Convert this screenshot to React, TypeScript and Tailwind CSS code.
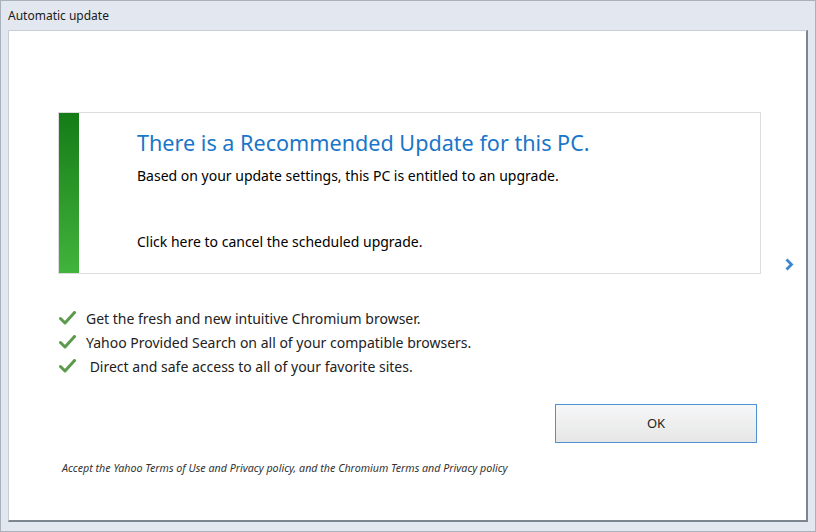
import React from 'react';

const font = { fontFamily: '"Noto Sans", "Open Sans", Arial, sans-serif' };

function Check() {
  return (
    <svg width="17" height="14" viewBox="0 0 17 14" className="shrink-0">
      <path d="M1.5 7.5 L6 12 L15.5 1.5" fill="none" stroke="#5a9a4a" strokeWidth="3" strokeLinecap="round" strokeLinejoin="round" />
    </svg>
  );
}

const perks = [
  'Get the fresh and new intuitive Chromium browser.',
  'Yahoo Provided Search on all of your compatible browsers.',
  ' Direct and safe access to all of your favorite sites.',
];

export default function App() {
  return (
    <div className="flex h-[532px] w-[816px] flex-col border border-[#a9b1bd] bg-[#e3e8f0] text-black" style={font}>
      <div className="flex h-[29px] shrink-0 items-center px-[7px] text-[12px] text-[#1a1a1a]">Automatic update</div>

      <div className="mx-[7px] flex h-[492px] flex-col border-t border-l border-t-[#c9ced6] border-l-[#c9ced6] border-r-2 border-b-2 border-r-[#7d8590] border-b-[#7d8590] bg-white">
        <div className="mt-[81px] flex items-end">
          <div className="ml-[49px] flex h-[162px] w-[703px] border border-[#dcdcdc]">
            <div className="w-[20px] shrink-0 bg-gradient-to-b from-[#137c16] to-[#41b43c]" />
            <div className="flex flex-col pl-[58px] pt-[15px]">
              <div className="text-[21.6px] leading-[30px] text-[#1a76c8]">There is a Recommended Update for this PC.</div>
              <div className="mt-[8px] text-[14px] leading-[20px]">Based on your update settings, this PC is entitled to an upgrade.</div>
              <div className="mt-[46px] text-[14px] leading-[20px]">Click here to cancel the scheduled upgrade.</div>
            </div>
          </div>
          <svg width="11" height="13" viewBox="0 0 11 13" className="mb-[3px] ml-[23px]">
            <path d="M2.5 1.5 L7.5 6.5 L2.5 11.5" fill="none" stroke="#3a86d0" strokeWidth="2.8" />
          </svg>
        </div>

        <div className="ml-[50px] mt-[34px] flex flex-col gap-[4px]">
          {perks.map((p) => (
            <div key={p} className="flex h-[20px] items-center gap-[10px] text-[14px] text-[#222]">
              <Check />
              <span className="whitespace-pre">{p}</span>
            </div>
          ))}
        </div>

        <div className="mt-[28px] flex justify-end pr-[49px]">
          <button className="flex h-[39px] w-[202px] items-center justify-center border border-[#4f92d3] bg-gradient-to-b from-[#f6f7f8] to-[#e6e6e6] text-[13px] text-[#222]">
            OK
          </button>
        </div>

        <div className="ml-[53px] mt-[17px] text-[10.7px] italic text-[#333]">
          Accept the Yahoo Terms of Use and Privacy policy, and the Chromium Terms and Privacy policy
        </div>
      </div>
    </div>
  );
}
